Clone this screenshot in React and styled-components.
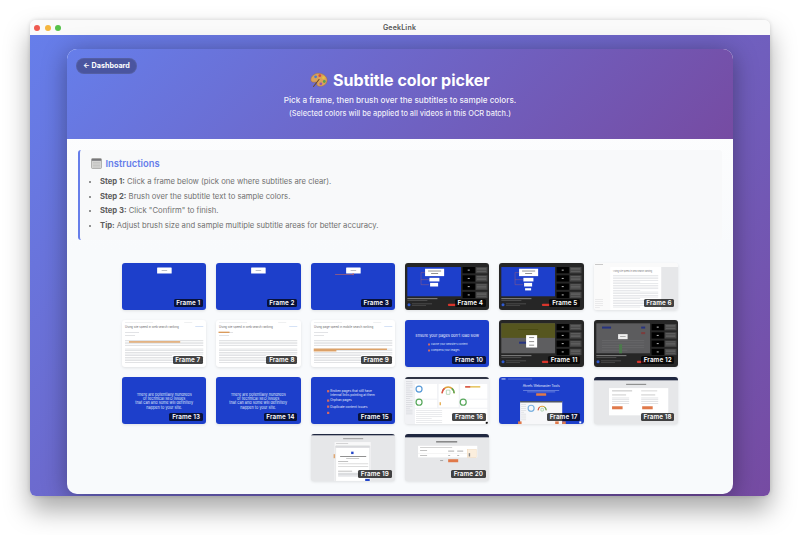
import React from 'react';
import styled, { createGlobalStyle } from 'styled-components';

const GlobalStyle = createGlobalStyle`
  html, body { margin: 0; padding: 0; background: #fff; }
  * { box-sizing: border-box; }
  body { font-family: 'Inter', 'Liberation Sans', sans-serif; }
`;

const Desktop = styled.div`
  width: 800px;
  height: 535px;
  padding: 20px 30px 39px;
  overflow: hidden;
  background: #fff;
`;

const AppWindow = styled.div`
  height: 476px;
  display: flex;
  flex-direction: column;
  border-radius: 6px;
  overflow: hidden;
  box-shadow: 0 14px 26px rgba(0, 0, 0, 0.34), 0 0 4px rgba(0, 0, 0, 0.14);
`;

const TitleBar = styled.div`
  height: 15px;
  flex: none;
  display: grid;
  grid-template-columns: 1fr auto 1fr;
  align-items: center;
  padding: 0 5px 0 4px;
  background: #fafafa;
  color: #555;
  font-size: 7px;
  font-weight: 600;
  letter-spacing: 0.2px;
`;

const Lights = styled.div`
  display: flex;
  gap: 4.5px;
`;

const Light = styled.span`
  width: 6px;
  height: 6px;
  border-radius: 50%;
  background: ${(p) => p.$color};
`;

const Backdrop = styled.div`
  flex: 1;
  min-height: 0;
  padding: 14px 37px 2px;
  background: linear-gradient(135deg, #667eea 0%, #764ba2 100%);
`;

const Card = styled.main`
  height: 100%;
  display: flex;
  flex-direction: column;
  border-radius: 10px;
  overflow: hidden;
  background: linear-gradient(180deg, #ffffff 0%, #f8fafc 45%, #f8fafc 100%);
  box-shadow: 0 4px 24px rgba(0, 0, 0, 0.36);
`;

const Header = styled.header`
  height: 90px;
  flex: none;
  display: flex;
  flex-direction: column;
  align-items: center;
  padding: 8.5px 9px 0;
  color: #fff;
  background: linear-gradient(135deg, #667eea 0%, #764ba2 100%);
`;

const BackButton = styled.button`
  align-self: flex-start;
  height: 16px;
  padding: 0 6px;
  display: flex;
  align-items: center;
  gap: 2px;
  border: 1px solid rgba(255, 255, 255, 0.06);
  border-radius: 8px;
  background: #4a559f;
  color: #fff;
  font: 700 7.2px 'Inter', sans-serif;
`;

const Title = styled.h1`
  margin: -4px 0 0;
  display: flex;
  align-items: center;
  gap: 5px;
  font-size: 16px;
  line-height: 20px;
  font-weight: 700;
`;

const Lead = styled.p`
  margin: 4px 0 0;
  font-size: 8.15px;
  line-height: 12px;
  font-weight: 500;
  color: rgba(255, 255, 255, 0.93);
`;

const Note = styled.p`
  margin: 2px 0 0;
  font-size: 7.4px;
  line-height: 11px;
  font-weight: 500;
  color: rgba(255, 255, 255, 0.9);
`;

const Content = styled.div`
  flex: 1;
  min-height: 0;
  padding: 11px 11px 0;
`;

const Instructions = styled.section`
  height: 90px;
  padding: 7px 12px 0 11px;
  border-left: 2.5px solid #667eea;
  border-radius: 3px;
  background: #f8f9fa;
`;

const InstructionsTitle = styled.h2`
  margin: 0 0 5px;
  display: flex;
  align-items: center;
  gap: 3.5px;
  font-size: 9.4px;
  line-height: 13px;
  font-weight: 600;
  color: #667eea;
`;

const Steps = styled.ul`
  margin: 0;
  padding: 0 0 0 9px;
  font-size: 7.7px;
  line-height: 14.5px;
  color: #707070;

  b {
    font-weight: 700;
    color: #5c5c5c;
  }
`;

const Grid = styled.div`
  margin: 22.5px -1px 0;
  display: flex;
  flex-wrap: wrap;
  justify-content: center;
  gap: 9.6px 10px;
`;

const Thumb = styled.button`
  position: relative;
  width: 84.3px;
  aspect-ratio: 16 / 9;
  padding: 0;
  border: 0;
  border-radius: 3px;
  overflow: hidden;
  background: ${(p) => p.$bg};
  box-shadow: 0 1px 3px rgba(0, 0, 0, 0.1);

  svg {
    display: block;
    width: 100%;
    height: 100%;
  }
`;

const FrameLabel = styled.span`
  position: absolute;
  right: 3.5px;
  bottom: 2.5px;
  height: 8.5px;
  padding: 0 2.7px;
  border-radius: 1.5px;
  background: rgba(0, 0, 0, 0.72);
  color: #fff;
  font: 600 6.3px/8.5px 'Inter', sans-serif;
  letter-spacing: 0.1px;
`;

const PaletteIcon = () => (
  <svg width="18" height="16" viewBox="0 0 18 16">
    <path d="M1 6.500C2 2.800 6.500.6 10.500 1.500c4 .9 7 3.800 6.600 7.200-.4 3.400-3.800 6-7.800 5.600-2-.2-2.500-1.200-2.300-2.400.2-1.500-1-2-2.400-1.700C2 10.600.3 9.200 1 6.500z" fill="#d9a25a" stroke="#a8733a" strokeWidth=".5" />
    <circle cx="5.600" cy="4.800" r="1.400" fill="#4a7bd0" />
    <circle cx="9.800" cy="3.700" r="1.400" fill="#d9483f" />
    <circle cx="13.500" cy="5.700" r="1.400" fill="#e8c33e" />
    <circle cx="14.300" cy="9.500" r="1.400" fill="#58a14e" />
    <circle cx="10.800" cy="11.800" r="1.400" fill="#8f55b5" />
    <path d="M3.500 14.500 9 7.500" stroke="#6d4a2b" strokeWidth="1.100" strokeLinecap="round" />
  </svg>
);

const NotebookIcon = () => (
  <svg width="11" height="11" viewBox="0 0 11 11">
    <rect x=".5" y=".5" width="10" height="10" rx="1" fill="#d5d5d3" stroke="#8f8f8c" strokeWidth=".6" />
    <rect x=".8" y=".8" width="9.400" height="2" fill="#77777a" />
    <path d="M2 4.500h7M2 6h7M2 7.500h7M2 9h7" stroke="#b3b3b0" strokeWidth=".45" />
  </svg>
);

const Art = ({ children }) => (
  <svg viewBox="0 0 84 47" preserveAspectRatio="none">{children}</svg>
);

// rows of grey bars stand in for the unreadable copy in the video stills
const Lines = ({ x, y, w, n, step = 1.7, color = '#dcdee2', h = 0.6 }) => (
  <>
    {Array.from({ length: n }, (_, i) => (
      <rect key={i} x={x} y={y + i * step} width={i % 5 === 4 ? w * 0.6 : w} height={h} fill={color} />
    ))}
  </>
);

const BlueTitle = ({ line }) => (
  <Art>
    <rect x="35" y="4.500" width="14.500" height="6" rx=".4" fill="#fff" />
    <rect x="39.500" y="7" width="5.500" height=".9" fill="#b5b9c3" />
    {line && <rect x="24" y="11.300" width="18" height=".6" fill="#c9695f" />}
    {line && <rect x="41.500" y="10" width="1" height="2" fill="#c9695f" />}
  </Art>
);

const Article = ({ marks, title = 'Using site speed in web search ranking' }) => (
  <Art>
    <rect x="3" y="2" width="28" height=".5" fill="#dfe1e4" />
    <rect x="62" y="2" width="8" height=".5" fill="#dfe1e4" />
    <text x="3" y="7.800" fontSize="2.900" fill="#6a6a6a" fontFamily="Inter">{title}</text>
    <rect x="73" y="6.200" width="8" height=".6" fill="#b9cff0" />
    <Lines x={3} y={12} w={14} n={1} color="#cfd1d5" />
    <Lines x={3} y={15} w={10} n={1} color="#cfd1d5" />
    <Lines x={3} y={20} w={78} n={4} step={1.650} color="#cfd1d5" />
    <Lines x={3} y={28.500} w={78} n={9} step={1.650} color="#cfd1d5" />
    {marks.map(([x, y, w], i) => (
      <rect key={i} x={x} y={y} width={w} height="1.100" fill="#d88a3c" />
    ))}
  </Art>
);

const Sidebar = () => (
  <>
    {[0, 1, 2, 3].map((i) => (
      <g key={i}>
        <rect x="57.400" y={4 + i * 8.200} width="12.300" height="6.200" fill="#000" />
        <rect x="62.500" y={6.600 + i * 8.200} width="2" height=".9" fill="#ccc" />
        <rect x="70.700" y={4 + i * 8.200} width="11.500" height="6.200" fill="#474747" />
        <Lines x={71.500} y={5 + i * 8.200} w={9.500} n={3} step={1.500} color="#6d6d6d" />
      </g>
    ))}
  </>
);

const PlayerBar = () => (
  <>
    <rect x="2.300" y="35" width="30" height=".8" fill="#9a9a9a" />
    <rect x="2.300" y="36.800" width="20" height=".5" fill="#707070" />
    <circle cx="4" cy="41.300" r="1.500" fill="#2f5ad0" />
    <rect x="7" y="40.300" width="20" height=".5" fill="#707070" />
    <rect x="7" y="41.700" width="14" height=".5" fill="#5f5f5f" />
    <rect x="43" y="40.300" width="8.500" height="2.400" rx=".5" fill="#d9352c" />
  </>
);

const VideoTree = ({ extra }) => (
  <Art>
    <rect x="2.300" y="4" width="53.500" height="29" fill="#1d3fcb" />
    <rect x="20" y="5.700" width="19" height="7.300" fill="#fff" />
    <rect x="23" y="7.500" width="13" height=".9" fill="#888" />
    <rect x="26" y="10" width="7" height=".9" fill="#888" />
    <path d="M20 9.500h-4v12h8M16 16.500h8" stroke="#c9695f" strokeWidth=".35" fill="none" />
    <rect x="24.300" y="14.700" width="10" height="3.600" fill="#fff" />
    <rect x="25" y="19.700" width="8" height="3.600" fill="#fff" />
    {extra && <rect x="26" y="25" width="6" height="2.200" fill="#fff" />}
    <Sidebar />
    <PlayerBar />
  </Art>
);

const PageStill = () => (
  <Art>
    <rect width="84" height="47" fill="#fafafa" />
    <rect x="1" y="1" width="8" height=".6" fill="#aaa" />
    <rect x="16" y="4" width="68" height="43" fill="#e6e7e9" />
    <rect x="16" y="4" width="51" height="43" fill="#fff" />
    <text x="19" y="8.500" fontSize="2.100" fill="#777" fontFamily="Inter">Using site speed in web search ranking</text>
    <Lines x={19} y={12} w={45} n={20} step={1.650} color="#d8dade" />
    <Lines x={1} y={36} w={8} n={5} step={1.900} color="#dfdfe2" />
  </Art>
);

const BlueText = ({ lines }) => (
  <Art>
    {lines.map((l, i) => (
      <text key={i} x="42" y={18.500 + i * 4.300} fontSize="3.800" fill="#dfe5fa" textAnchor="middle" fontFamily="Inter">{l}</text>
    ))}
  </Art>
);

const PagesSlow = () => (
  <Art>
    <text x="42" y="16.500" fontSize="3.900" fill="#e6ebfb" textAnchor="middle" fontFamily="Inter">Ensure your pages don't load slow</text>
    <rect x="23" y="23.300" width="1.900" height="1.900" fill="#d9695f" />
    <text x="26" y="25.200" fontSize="2.600" fill="#dfe5fa" fontFamily="Inter">Cache your website's content</text>
    <rect x="23" y="29.300" width="1.900" height="1.900" fill="#d9695f" />
    <text x="26" y="31.200" fontSize="2.600" fill="#dfe5fa" fontFamily="Inter">Compress your images</text>
  </Art>
);

const BrokenPages = () => (
  <Art>
    <rect x="16" y="13" width="2.200" height="2.200" fill="#d9695f" />
    <text x="19.300" y="15" fontSize="3.200" fill="#e6ebfb" fontFamily="Inter">Broken pages that still have</text>
    <text x="19.300" y="19.300" fontSize="3.200" fill="#e6ebfb" fontFamily="Inter">internal links pointing at them</text>
    <rect x="16" y="22.300" width="2.200" height="2.200" fill="#d9695f" />
    <text x="19.300" y="24.300" fontSize="3.200" fill="#e6ebfb" fontFamily="Inter">Orphan pages</text>
    <rect x="16" y="28.300" width="2.200" height="2.200" fill="#d9695f" />
    <text x="19.300" y="30.300" fontSize="3.200" fill="#e6ebfb" fontFamily="Inter">Duplicate content issues</text>
    <rect x="16" y="34.500" width="2.200" height="2.200" fill="#d9695f" />
  </Art>
);

const OliveStill = () => (
  <Art>
    <rect x="2.300" y="3.300" width="53.500" height="29.700" fill="#5e5e60" />
    <rect x="2.300" y="3.300" width="53.500" height="14.400" fill="#56561f" />
    <rect x="19" y="9" width="20" height=".8" fill="#46470f" />
    <rect x="20" y="21.500" width="7" height="2" fill="#26337f" />
    <rect x="27" y="15" width="11" height="12.300" fill="#fff" />
    <rect x="30" y="17" width="5" height=".9" fill="#888" />
    <rect x="30" y="21" width="5" height=".9" fill="#888" />
    <rect x="30" y="24.500" width="5" height=".9" fill="#888" />
    <Sidebar />
    <PlayerBar />
  </Art>
);

const GreyStill = () => (
  <Art>
    <rect x="2.300" y="3.300" width="53.500" height="29.700" fill="#5c5c5e" />
    <rect x="8" y="6.500" width="9" height="2" fill="#26337f" />
    <rect x="47" y="6.500" width="4" height="2" fill="#26337f" />
    <rect x="47" y="12" width="4" height="2" fill="#7c3d3d" />
    <Lines x={8} y={20} w={42} n={5} step={2.400} color="#6c6c6e" />
    <rect x="25" y="24" width="3" height="9" fill="#4c7a4c" />
    <rect x="24" y="14" width="9.500" height="5" fill="#eee" />
    <rect x="26" y="16" width="5.500" height=".8" fill="#999" />
    <Sidebar />
    <PlayerBar />
  </Art>
);

const Gauge = ({ cx, cy, r, w }) => (
  <>
    <path d={`M${cx - r} ${cy}A${r} ${r} 0 0 1 ${cx + r} ${cy}`} fill="none" stroke="#e0a23c" strokeWidth={w} />
    <path d={`M${cx - r} ${cy}A${r} ${r} 0 0 1 ${cx - r * 0.6} ${cy - r * 0.8}`} fill="none" stroke="#d9534f" strokeWidth={w} />
    <path d={`M${cx + r * 0.6} ${cy - r * 0.8}A${r} ${r} 0 0 1 ${cx + r} ${cy}`} fill="none" stroke="#58a85c" strokeWidth={w} />
    <rect x={cx - r * 0.3} y={cy - r * 0.5} width={r * 0.6} height={r * 0.7} rx=".4" fill="none" stroke="#58a85c" strokeWidth=".4" />
  </>
);

const Donut = ({ cx, cy, color }) => (
  <circle cx={cx} cy={cy} r="3" fill="none" stroke={color} strokeWidth="1.200" />
);

const DashboardStill = () => (
  <Art>
    <rect width="84" height="47" fill="#f1f2f5" />
    <rect width="84" height="2" fill="#2e3444" />
    <Lines x={1} y={4} w={6.500} n={18} step={1.900} color="#cfd1d6" />
    <rect x="10" y="7" width="22" height="14.500" fill="#fff" />
    <rect x="33.500" y="7" width="20" height="23" fill="#fff" />
    <rect x="55" y="7" width="27" height="14.500" fill="#fff" />
    <rect x="10" y="22.500" width="22" height="8" fill="#fff" />
    <rect x="55" y="22.500" width="27" height="8" fill="#fff" />
    <Donut cx={14} cy={12} color="#5a9bd8" />
    <Donut cx={14} cy={25} color="#58a85c" />
    <Donut cx={58} cy={25} color="#58a85c" />
    <Gauge cx={43} cy={16} r={6} w={1.500} />
    <rect x="60" y="9" width="15" height="1.500" fill="#e6c35c" />
    <rect x="60" y="9" width="5" height="1.500" fill="#d9534f" />
    <rect x="34.500" y="25" width="1.200" height="3" fill="#e0a23c" />
    <rect x="10" y="31.500" width="72" height="15.500" fill="#fff" />
    <Lines x={11} y={33} w={26} n={7} step={2} color="#dcdee2" />
    <rect x="80.500" y="44.500" width="2" height="2" fill="#111" />
  </Art>
);

const Landing = () => (
  <Art>
    <rect x="2.500" y="1.500" width="4" height=".9" fill="#e6ebfb" />
    <Lines x={9} y={1.700} w={24} n={1} color="#7f94e5" />
    <text x="42" y="10.300" fontSize="3.200" fill="#e6ebfb" textAnchor="middle" fontFamily="Inter">Ahrefs Webmaster Tools</text>
    <rect x="24" y="13" width="36" height=".6" fill="#8ea1e8" />
    <rect x="28" y="14.500" width="28" height=".6" fill="#8ea1e8" />
    <rect x="37" y="16" width="10" height="2.700" rx=".4" fill="#e0794a" />
    <rect x="21" y="24" width="42" height="23" fill="#f7f7f9" />
    <rect x="21" y="24" width="42" height="1.200" fill="#2e3444" />
    <Lines x={22} y={27} w={5} n={9} step={1.900} color="#d5d7db" />
    <Gauge cx={43} cy={33} r={4} w={1} />
    <Donut cx={32} cy={31} color="#7db2e0" />
    <rect x="19" y="44" width="3.500" height="3" fill="#e0794a" />
    <rect x="56" y="44" width="3.500" height="3" fill="#e0794a" />
    <rect x="63" y="44" width="3.500" height="3" fill="#e0794a" />
    <rect x="80" y="44" width="2" height="2" fill="#fff" />
  </Art>
);

const ProjectStill = () => (
  <Art>
    <rect width="84" height="47" fill="#e6e7e9" />
    <rect width="84" height="3.300" fill="#1f2740" />
    <rect x="32" y="6.800" width="20" height=".9" fill="#777" />
    <rect x="15" y="11" width="59" height="27" fill="#fff" />
    <Lines x={18} y={13.500} w={20} n={1} color="#999" />
    <Lines x={47} y={13.500} w={16} n={1} color="#bbb" />
    <Lines x={18} y={17.500} w={14} n={1} color="#aaa" />
    <Lines x={18} y={20.500} w={17} n={4} step={1.800} color="#cfd1d5" />
    <Lines x={47} y={17.500} w={14} n={1} color="#aaa" />
    <Lines x={47} y={20.500} w={17} n={4} step={1.800} color="#cfd1d5" />
    <rect x="18" y="29" width="10.500" height="3" fill="#e0794a" />
    <rect x="48" y="29" width="10.500" height="3" fill="#e0794a" />
  </Art>
);

const ModalStill = () => (
  <Art>
    <rect width="84" height="47" fill="#e6e7e9" />
    <rect width="84" height="1.300" fill="#1f2740" />
    <rect x="32" y="4.300" width="20" height=".8" fill="#888" />
    <rect x="23.500" y="8" width="36" height="39" fill="#f8f8f9" />
    <Lines x={25} y={9} w={12} n={1} color="#bbb" />
    <rect x="24.500" y="11.700" width="34" height="35.300" rx=".6" fill="#fff" stroke="#bdbfc3" strokeWidth=".3" />
    <rect x="24.500" y="11.700" width="34" height="2" fill="#d8d9dc" />
    <rect x="40" y="17.500" width="2.400" height="2.400" fill="#2446c9" />
    <rect x="29" y="22" width="26" height=".8" fill="#777" />
    <rect x="35" y="23.800" width="13" height=".6" fill="#aaa" />
    <Lines x={27} y={27} w={10} n={1} color="#999" />
    <rect x="27" y="29.300" width="30" height=".6" fill="#c5c5c5" />
    <rect x="27" y="32" width="30" height=".6" fill="#c5c5c5" />
    <Lines x={27} y={36.500} w={14} n={1} color="#999" />
    <Lines x={27} y={38.500} w={30} n={3} step={1.300} color="#d5d7da" h={1} />
    <rect x="54" y="44.500" width="4.500" height="2.500" fill="#2446c9" />
    <rect x="22.500" y="20" width="1.500" height="4" fill="#e0a874" />
  </Art>
);

const TableStill = () => (
  <Art>
    <rect width="84" height="47" fill="#e6e7e9" />
    <rect width="84" height="3.300" fill="#1f2740" />
    <rect x="31" y="7.300" width="21" height="1" fill="#555" />
    <rect x="13" y="11.700" width="59" height="11.500" fill="#fff" />
    <Lines x={15} y={13} w={32} n={1} color="#b5b5b5" />
    <Lines x={15} y={16} w={7} n={1} color="#999" />
    <Lines x={15} y={21} w={7} n={1} color="#999" />
    <rect x="13" y="19" width="49" height=".3" fill="#ddd" />
    <rect x="43" y="16.300" width="6" height="1.400" fill="#c5c5c5" />
    <rect x="52" y="16.300" width="6" height="1.400" fill="#c5c5c5" />
    <rect x="43" y="21" width="2" height=".8" fill="#aaa" />
    <rect x="52" y="21" width="2" height=".8" fill="#aaa" />
    <rect x="62" y="15.300" width="9" height="8" fill="#fbeedd" stroke="#e7c79c" strokeWidth=".3" />
    <rect x="63.500" y="19" width="1.400" height="3.300" fill="#888" />
    <rect x="35" y="26" width="3" height=".8" fill="#999" />
    <rect x="43" y="25" width="10" height="3" fill="#e0794a" />
  </Art>
);

const SEO_LINES = [
  'There are potentially hundreds',
  'of technical SEO issues',
  'that can and some will definitely',
  'happen to your site.',
];

const frames = [
  { bg: '#1d3fcb', art: <BlueTitle /> },
  { bg: '#1d3fcb', art: <BlueTitle /> },
  { bg: '#1d3fcb', art: <BlueTitle line /> },
  { bg: '#262626', art: <VideoTree /> },
  { bg: '#262626', art: <VideoTree extra /> },
  { bg: '#fafafa', art: <PageStill /> },
  { bg: '#fff', art: <Article marks={[[7, 21.200, 51]]} /> },
  { bg: '#fff', art: <Article marks={[[2.500, 11.600, 11]]} /> },
  { bg: '#fff', art: <Article title="Using page speed in mobile search ranking" marks={[[2.700, 28.400, 73], [2.700, 30, 22.600]]} /> },
  { bg: '#1d3fcb', art: <PagesSlow /> },
  { bg: '#262626', art: <OliveStill /> },
  { bg: '#262626', art: <GreyStill /> },
  { bg: '#1d3fcb', art: <BlueText lines={SEO_LINES} /> },
  { bg: '#1d3fcb', art: <BlueText lines={SEO_LINES} /> },
  { bg: '#1d3fcb', art: <BrokenPages /> },
  { bg: '#f1f2f5', art: <DashboardStill /> },
  { bg: '#1d3fcb', art: <Landing /> },
  { bg: '#e6e7e9', art: <ProjectStill /> },
  { bg: '#e6e7e9', art: <ModalStill /> },
  { bg: '#e6e7e9', art: <TableStill /> },
];

export default function App() {
  return (
    <>
      <GlobalStyle />
      <Desktop>
        <AppWindow>
          <TitleBar>
            <Lights>
              <Light $color="#ef5a50" />
              <Light $color="#f5b63f" />
              <Light $color="#56c24a" />
            </Lights>
            <span>GeekLink</span>
          </TitleBar>
          <Backdrop>
            <Card>
              <Header>
                <BackButton>← Dashboard</BackButton>
                <Title><PaletteIcon /> Subtitle color picker</Title>
                <Lead>Pick a frame, then brush over the subtitles to sample colors.</Lead>
                <Note>(Selected colors will be applied to all videos in this OCR batch.)</Note>
              </Header>
              <Content>
                <Instructions>
                  <InstructionsTitle><NotebookIcon /> Instructions</InstructionsTitle>
                  <Steps>
                    <li><b>Step 1:</b> Click a frame below (pick one where subtitles are clear).</li>
                    <li><b>Step 2:</b> Brush over the subtitle text to sample colors.</li>
                    <li><b>Step 3:</b> Click "Confirm" to finish.</li>
                    <li><b>Tip:</b> Adjust brush size and sample multiple subtitle areas for better accuracy.</li>
                  </Steps>
                </Instructions>
                <Grid>
                  {frames.map((f, i) => (
                    <Thumb key={i} $bg={f.bg}>
                      {f.art}
                      <FrameLabel>Frame {i + 1}</FrameLabel>
                    </Thumb>
                  ))}
                </Grid>
              </Content>
            </Card>
          </Backdrop>
        </AppWindow>
      </Desktop>
    </>
  );
}
